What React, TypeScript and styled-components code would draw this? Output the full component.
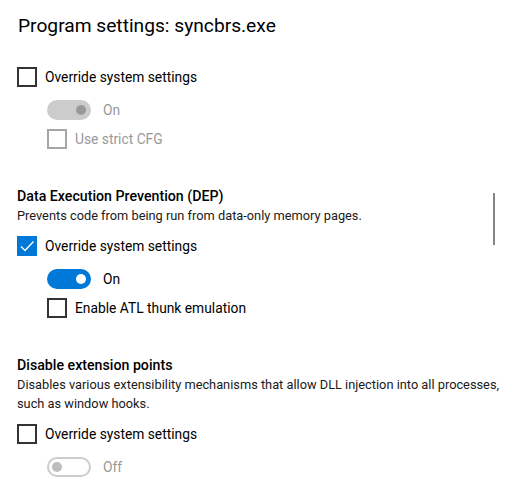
import styled, { createGlobalStyle, css } from "styled-components";

const Global = createGlobalStyle`
  html, body { margin: 0; padding: 0; background: #fff; }
  body {
    font-family: Roboto, "Noto Sans", sans-serif;
    color: #000;
    width: 506px;
    height: 495px;
    overflow: hidden;
  }
`

const Page = styled.div`
  position: relative;
  padding: 12px 0 0 17px;
  height: 495px;
  box-sizing: border-box;
`

const Title = styled.h1`
  margin: 0 0 27px 1px;
  font-size: 19.2px;
  font-weight: 400;
  line-height: 28px;
`

const Section = styled.section`
  margin-bottom: 37px;
`

const Heading = styled.h2`
  margin: 0;
  font-size: 14.2px;
  font-weight: 500;
  line-height: 20px;
`

const Desc = styled.p`
  margin: 0 0 11px;
  font-size: 12.8px;
  line-height: 19px;
  color: #1a1a1a;
`

const Row = styled.label<{ $indent?: boolean; $muted?: boolean }>`
  display: flex;
  align-items: center;
  gap: 8px;
  height: 20px;
  margin: 0 0 13px ${p => (p.$indent ? "30px" : "0")};
  font-size: 13.8px;
  color: ${p => (p.$muted ? "#999" : "#000")};
`

const Box = styled.span<{ $checked?: boolean; $muted?: boolean }>`
  width: 20px;
  height: 20px;
  box-sizing: border-box;
  display: flex;
  align-items: center;
  justify-content: center;
  border: 2px solid ${p => (p.$muted ? "#a6a6a6" : "#333")};
  ${p => p.$checked && css`
    background: #0078d7;
    border-color: #0078d7;
  `}
`

const ToggleRow = styled.div<{ $muted?: boolean }>`
  display: flex;
  align-items: center;
  gap: 12px;
  height: 20px;
  margin: 0 0 9px 30px;
  font-size: 13.8px;
  color: ${p => (p.$muted ? "#999" : "#000")};
`

type ToggleState = "on" | "disabledOn" | "disabledOff"

const Track = styled.span<{ $state: ToggleState }>`
  position: relative;
  width: 44px;
  height: 20px;
  box-sizing: border-box;
  border-radius: 10px;
  ${p => p.$state === "on" && css`background: #0078d7;`}
  ${p => p.$state === "disabledOn" && css`background: #cccccc;`}
  ${p => p.$state === "disabledOff" && css`border: 2px solid #cccccc; background: #fff;`}
`

const Knob = styled.span<{ $state: ToggleState }>`
  position: absolute;
  top: 50%;
  width: 10px;
  height: 10px;
  margin-top: -5px;
  border-radius: 50%;
  ${p => p.$state === "on" && css`right: 5px; background: #fff;`}
  ${p => p.$state === "disabledOn" && css`right: 5px; background: #999;`}
  ${p => p.$state === "disabledOff" && css`left: 3px; background: #bdbdbd;`}
`

const Scrollbar = styled.div`
  position: absolute;
  left: 493px;
  top: 193px;
  width: 2px;
  height: 52px;
  background: #858585;
`

function Check({ checked, muted }: { checked?: boolean; muted?: boolean }) {
  return (
    <Box $checked={checked} $muted={muted}>
      {checked && (
        <svg width="16" height="16" viewBox="0 0 16 16">
          <path d="M2 8.5 L6 12.5 L14.5 3.5" fill="none" stroke="#fff" strokeWidth="1.4" />
        </svg>
      )}
    </Box>
  )
}

function Toggle({ state, label }: { state: ToggleState; label: string }) {
  return (
    <ToggleRow $muted={state !== "on"}>
      <Track $state={state}><Knob $state={state} /></Track>
      {label}
    </ToggleRow>
  )
}

export default function App() {
  return (
    <>
      <Global />
      <Page>
        <Title>Program settings: syncbrs.exe</Title>

        <Section>
          <Row><Check />Override system settings</Row>
          <Toggle state="disabledOn" label="On" />
          <Row $indent $muted><Check muted />Use strict CFG</Row>
        </Section>

        <Section>
          <Heading>Data Execution Prevention (DEP)</Heading>
          <Desc>Prevents code from being run from data-only memory pages.</Desc>
          <Row><Check checked />Override system settings</Row>
          <Toggle state="on" label="On" />
          <Row $indent><Check />Enable ATL thunk emulation</Row>
        </Section>

        <Section>
          <Heading>Disable extension points</Heading>
          <Desc>Disables various extensibility mechanisms that allow DLL injection into all processes, such as window hooks.</Desc>
          <Row><Check />Override system settings</Row>
          <Toggle state="disabledOff" label="Off" />
        </Section>

        <Scrollbar />
      </Page>
    </>
  )
}
